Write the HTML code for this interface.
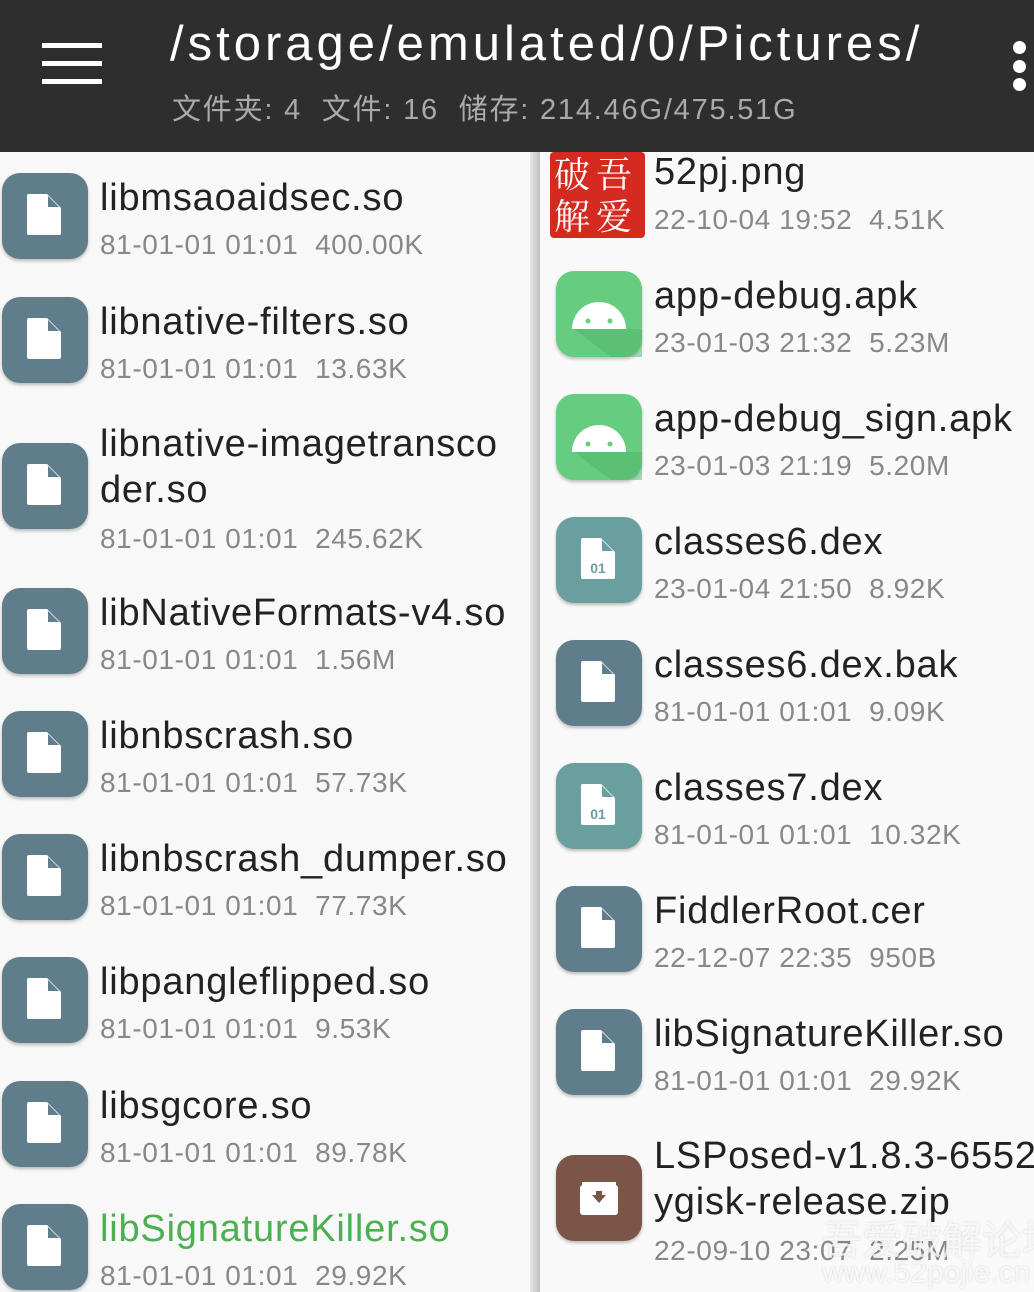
<!DOCTYPE html>
<html><head><meta charset="utf-8"><style>
*{margin:0;padding:0;box-sizing:border-box}
body{width:1034px;height:1292px;overflow:hidden;background:#f8f8f8;position:relative;font-family:"Liberation Sans","Noto Sans CJK SC",sans-serif}
.hdr{position:absolute;left:0;top:0;width:1034px;height:152px;background:#2e2e2e}
.t{position:absolute;left:170px;top:16px;font-size:49px;color:#fff;white-space:nowrap;letter-spacing:4px}
.s{position:absolute;left:172px;top:86px;font-size:29px;color:#aaa;white-space:nowrap;letter-spacing:1.8px}
.bar{position:absolute;left:42px;width:60px;height:5px;background:#fff}
.dot{position:absolute;left:1013px;width:13px;height:13px;border-radius:50%;background:#fff}
.lp{position:absolute;left:0;top:152px;width:530px;height:1140px;background:#f8f8f8}
.div{position:absolute;left:530px;top:152px;width:10px;height:1140px;background:linear-gradient(90deg,#e4e4e4,#cfcfcf 60%,#bdbdbd)}
.rp{position:absolute;left:540px;top:152px;width:494px;height:1140px;background:#f9f9f9}
.ic{position:absolute;width:86px;height:86px;border-radius:18px;background:#607d8b;box-shadow:0 2px 3px rgba(0,0,0,.25)}
.ic svg{position:absolute;left:0;top:0}
.n{position:absolute;font-size:38px;line-height:40px;color:#222;white-space:nowrap;letter-spacing:0.8px}
.m{position:absolute;font-size:28px;line-height:30px;color:#888;white-space:nowrap;letter-spacing:0.6px}
</style></head><body>
<div class="hdr">
<div class="bar" style="top:43px"></div><div class="bar" style="top:61px"></div><div class="bar" style="top:79px"></div>
<div class="t">/storage/emulated/0/Pictures/</div>
<div class="s">文件夹: 4&nbsp; 文件: 16&nbsp; 储存: 214.46G/475.51G</div>
<div class="dot" style="top:41px"></div><div class="dot" style="top:60px"></div><div class="dot" style="top:78px"></div>
</div>
<div class="lp"></div><div class="div"></div><div class="rp"></div>

<div id="L"></div>
<script>
function page(c){return '<path d="M27 21h18l14 14v25q0 2-2 2h-30q-2 0-2-2v-37q0-2 2-2z" fill="#fff"/><path d="M46 23l11 11h-11z" fill="'+c+'"/>';}
var doc='<svg width="86" height="86">'+page('#607d8b')+'</svg>';
var dex='<svg width="86" height="86">'+page('#6a9fa0')+'<text x="42" y="56" font-size="14" font-weight="bold" fill="#6a9fa0" text-anchor="middle" font-family="Liberation Sans">01</text></svg>';
var zip='<svg width="86" height="86"><rect x="24" y="30" width="38" height="30" rx="3" fill="#fff"/><rect x="26" y="27" width="34" height="3" fill="#fff"/><path d="M36 40h14l-7 8z" fill="#795548"/><rect x="40" y="36" width="6" height="5" fill="#795548"/></svg>';
var apk='<svg width="86" height="86"><path d="M18 58L55 86h31V58z" fill="#4fb468" opacity=".5"/><path d="M16 58a27 27 0 0 1 54 0z" fill="#fff"/><line x1="28" y1="36" x2="32" y2="43" stroke="#fff" stroke-width="2"/><line x1="58" y1="36" x2="54" y2="43" stroke="#fff" stroke-width="2"/><circle cx="32" cy="50" r="2.5" fill="#66cc7f"/><circle cx="54" cy="50" r="2.5" fill="#66cc7f"/></svg>';
function item(x,c,names,meta,type,col){
 var h='';var bg={doc:'#607d8b',dex:'#6a9fa0',zip:'#7a5548',apk:'#66cc7f'}[type];
 var svg={doc:doc,dex:dex,zip:zip,apk:apk}[type];
 h+='<div class="ic" style="left:'+x+'px;top:'+(c-43)+'px;background:'+bg+'">'+svg+'</div>';
 var two=names.length>1;
 var y=c-(two?62:38);
 for(var i=0;i<names.length;i++){h+='<div class="n" style="left:'+(x+98)+'px;top:'+(y+i*46)+'px'+(col?';color:'+col:'')+'">'+names[i]+'</div>';}
 h+='<div class="m" style="left:'+(x+98)+'px;top:'+(c+(two?38:14))+'px">'+meta+'</div>';
 return h;
}
var h='';
var L=[[216,['libmsaoaidsec.so'],'81-01-01 01:01&nbsp; 400.00K'],
[340,['libnative-filters.so'],'81-01-01 01:01&nbsp; 13.63K'],
[486,['libnative-imagetransco','der.so'],'81-01-01 01:01&nbsp; 245.62K'],
[631,['libNativeFormats-v4.so'],'81-01-01 01:01&nbsp; 1.56M'],
[754,['libnbscrash.so'],'81-01-01 01:01&nbsp; 57.73K'],
[877,['libnbscrash_dumper.so'],'81-01-01 01:01&nbsp; 77.73K'],
[1000,['libpangleflipped.so'],'81-01-01 01:01&nbsp; 9.53K'],
[1124,['libsgcore.so'],'81-01-01 01:01&nbsp; 89.78K'],
[1247,['libSignatureKiller.so'],'81-01-01 01:01&nbsp; 29.92K','doc','#4caf50']];
L.forEach(function(a){h+=item(2,a[0],a[1],a[2],'doc',a[4]);});
var R=[[314,['app-debug.apk'],'23-01-03 21:32&nbsp; 5.23M','apk'],
[437,['app-debug_sign.apk'],'23-01-03 21:19&nbsp; 5.20M','apk'],
[560,['classes6.dex'],'23-01-04 21:50&nbsp; 8.92K','dex'],
[683,['classes6.dex.bak'],'81-01-01 01:01&nbsp; 9.09K','doc'],
[806,['classes7.dex'],'81-01-01 01:01&nbsp; 10.32K','dex'],
[929,['FiddlerRoot.cer'],'22-12-07 22:35&nbsp; 950B','doc'],
[1052,['libSignatureKiller.so'],'81-01-01 01:01&nbsp; 29.92K','doc'],
[1198,['LSPosed-v1.8.3-6552','ygisk-release.zip'],'22-09-10 23:07&nbsp; 2.25M','zip']];
R.forEach(function(a){h+=item(556,a[0],a[1],a[2],a[3]);});
document.getElementById('L').innerHTML=h;
</script>
<div style="position:absolute;left:550px;top:152px;width:95px;height:86px;background:#d42a20;border-radius:4px;color:#fff;font-family:'Noto Serif CJK SC',serif;font-size:36px;line-height:42px;padding-left:4px;letter-spacing:6px">破吾<br>解爱</div>
<div class="n" style="left:654px;top:152px">52pj.png</div>
<div class="m" style="left:654px;top:205px">22-10-04 19:52&nbsp; 4.51K</div>
<div style="position:absolute;left:822px;top:1208px;font-size:40px;color:rgba(255,255,255,.75);font-family:'Noto Sans CJK SC',sans-serif;white-space:nowrap;text-shadow:0 0 2px rgba(0,0,0,.15)">吾爱破解论坛</div>
<div style="position:absolute;left:822px;top:1256px;font-size:30px;color:rgba(255,255,255,.75);white-space:nowrap;text-shadow:0 0 2px rgba(0,0,0,.15)">www.52pojie.cn</div>
</body></html>
